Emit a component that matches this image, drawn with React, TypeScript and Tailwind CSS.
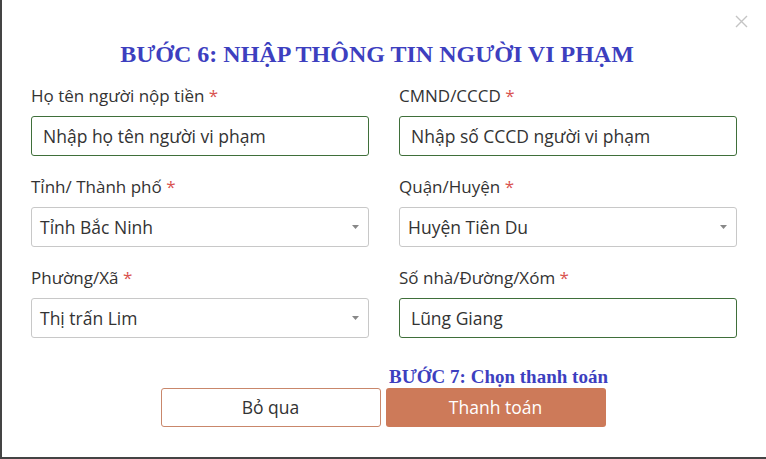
import React from "react";

const serif = { fontFamily: '"Liberation Serif", "Times New Roman", serif' };

function Label({ text }: { text: string }) {
    return (
        <label className="block h-[20px] text-[17px] leading-[20px] text-[#333]">
            {text} <span className="text-[#d9534f]">*</span>
        </label>
    );
}

function TextBox({ value }: { value: string }) {
    return (
        <div className="mt-[10px] flex h-[40px] items-center rounded-[3px] border border-[#3f6f3a] px-[11px] text-[17.5px] text-[#333]">
            {value}
        </div>
    );
}

function SelectBox({ value }: { value: string }) {
    return (
        <div className="mt-[10px] flex h-[40px] items-center justify-between rounded-[3px] border border-[#c8c8c8] pl-[8px] pr-[9px] text-[17.5px] text-[#333]">
            <span>{value}</span>
            <svg width="7" height="4" viewBox="0 0 7 4">
                <path d="M0 0 L7 0 L3.5 4 Z" fill="#888" />
            </svg>
        </div>
    );
}

export default function App() {
    return (
        <div
            className="relative h-[459px] w-[766px] overflow-hidden border-b-2 border-l-2 border-[#444] bg-white"
            style={{ fontFamily: '"Open Sans", Lato, sans-serif' }}
        >
            <button className="absolute right-[18px] top-[15px] text-[#c4c4c4]">
                <svg width="13" height="13" viewBox="0 0 13 13">
                    <path d="M1 1 L12 12 M12 1 L1 12" stroke="#c4c4c4" strokeWidth="1.4" />
                </svg>
            </button>

            <h2
                className="pr-[14px] pt-[38px] text-center text-[24px] font-bold leading-[32px] text-[#3d3fbf]"
                style={serif}
            >
                BƯỚC 6: NHẬP THÔNG TIN NGƯỜI VI PHẠM
            </h2>

            <div className="mt-[16px] grid grid-cols-2 gap-x-[30px] gap-y-[21px] pl-[29px] pr-[29px]">
                <div>
                    <Label text="Họ tên người nộp tiền" />
                    <TextBox value="Nhập họ tên người vi phạm" />
                </div>
                <div>
                    <Label text="CMND/CCCD" />
                    <TextBox value="Nhập số CCCD người vi phạm" />
                </div>
                <div>
                    <Label text="Tỉnh/ Thành phố" />
                    <SelectBox value="Tỉnh Bắc Ninh" />
                </div>
                <div>
                    <Label text="Quận/Huyện" />
                    <SelectBox value="Huyện Tiên Du" />
                </div>
                <div>
                    <Label text="Phường/Xã" />
                    <SelectBox value="Thị trấn Lim" />
                </div>
                <div>
                    <Label text="Số nhà/Đường/Xóm" />
                    <TextBox value="Lũng Giang" />
                </div>
            </div>

            <div className="mt-[28px] flex justify-center gap-[5px] pr-[2px]">
                <div className="flex w-[220px] flex-col justify-end">
                    <button className="h-[39px] w-[220px] rounded-[3px] border border-[#c9876b] bg-white text-[17.5px] text-[#333]">
                        Bỏ qua
                    </button>
                </div>
                <div className="flex w-[220px] flex-col items-center">
                    <div
                        className="whitespace-nowrap pl-[6px] text-[19px] font-bold leading-[22px] text-[#3d3fbf]"
                        style={serif}
                    >
                        BƯỚC 7: Chọn thanh toán
                    </div>
                    <button className="h-[39px] w-[220px] rounded-[3px] bg-[#cd7a59] text-[17.5px] text-white">
                        Thanh toán
                    </button>
                </div>
            </div>
        </div>
    );
}
